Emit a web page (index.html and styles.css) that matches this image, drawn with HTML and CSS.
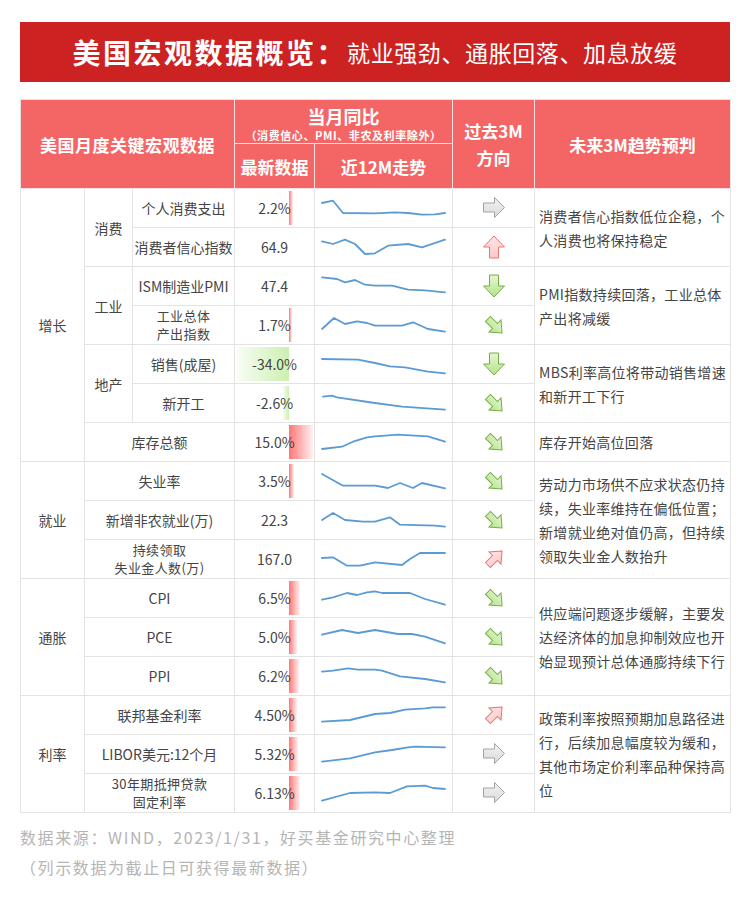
FILE: index.html
```html
<!DOCTYPE html>
<html lang="zh-CN">
<head>
<meta charset="utf-8">
<title>美国宏观数据概览</title>
<link rel="stylesheet" href="styles.css">
</head>
<body>
<svg class="sprite" aria-hidden="true">
  <defs>
    <linearGradient id="g-green" x1="0" y1="0" x2="0" y2="1"><stop offset="0" stop-color="#e4f7d2"/><stop offset="1" stop-color="#b4e38a"/></linearGradient>
    <linearGradient id="g-red" x1="0" y1="0" x2="0" y2="1"><stop offset="0" stop-color="#ffe6e6"/><stop offset="1" stop-color="#ffc8c8"/></linearGradient>
    <linearGradient id="g-grey" x1="0" y1="0" x2="0" y2="1"><stop offset="0" stop-color="#f3f3f3"/><stop offset="1" stop-color="#dadada"/></linearGradient>
  </defs>
  <symbol id="a-right" viewBox="0 0 24 24"><polygon points="1.5,7 12.5,7 12.5,1.5 22.5,11.5 12.5,21.5 12.5,16 1.5,16" fill="url(#g-grey)" stroke="#a3a3a3"/></symbol>
  <symbol id="a-up" viewBox="0 0 24 24"><polygon points="12,1 22.5,12 16.5,12 16.5,23 7.5,23 7.5,12 1.5,12" fill="url(#g-red)" stroke="#ee7272"/></symbol>
  <symbol id="a-down" viewBox="0 0 24 24"><polygon points="12,23 22.5,12 16.5,12 16.5,1 7.5,1 7.5,12 1.5,12" fill="url(#g-green)" stroke="#77ad49"/></symbol>
  <symbol id="a-dr" viewBox="0 0 24 24"><g transform="translate(13 13) rotate(45) translate(-10 -12)"><polygon points="0,8.5 10,8.5 10,3.5 20,12 10,20.5 10,15.5 0,15.5" fill="url(#g-green)" stroke="#77ad49"/></g></symbol>
  <symbol id="a-ur" viewBox="0 0 24 24"><g transform="translate(13 11) rotate(-45) translate(-10 -12)"><polygon points="0,8.5 10,8.5 10,3.5 20,12 10,20.5 10,15.5 0,15.5" fill="url(#g-red)" stroke="#ee7272"/></g></symbol>
</svg>

<div class="page">
  <div class="banner">
    <span class="lead">美国宏观数据概览：</span><span class="sub">就业强劲、通胀回落、加息放缓</span>
  </div>

  <table class="macro">
    <colgroup>
      <col class="c-cat"><col class="c-sub"><col class="c-item"><col class="c-val"><col class="c-trend"><col class="c-dir"><col class="c-note">
    </colgroup>
    <thead>
      <tr class="hr1">
        <th colspan="3" rowspan="2" class="h-name">美国月度关键宏观数据</th>
        <th colspan="2" class="h-yoy"><div class="yoy-title">当月同比</div><div class="yoy-note">（消费信心、PMI、非农及利率除外）</div></th>
        <th rowspan="2" class="h-dir">过去3M<br>方向</th>
        <th rowspan="2" class="h-note">未来3M趋势预判</th>
      </tr>
      <tr class="hr2">
        <th>最新数据</th>
        <th>近12M走势</th>
      </tr>
    </thead>
    <tbody>
      <tr>
        <td rowspan="7" class="cat">增长</td>
        <td rowspan="2" class="sub">消费</td>
        <td class="item">个人消费支出</td>
        <td class="val"><div class="bar pos" style="width:4px"></div><span>2.2%</span></td>
        <td class="trend"><svg viewBox="1 1 137 38"><polyline points="8,15 19,12.7 29,25 61,25.3 81,24.3 94,25 108,26.7 121,26.3 131,25"/></svg></td>
        <td class="dir"><svg><use href="#a-right"/></svg></td>
        <td rowspan="2" class="note">消费者信心指数低位企稳，个人消费也将保持稳定</td>
      </tr>
      <tr>
        <td class="item">消费者信心指数</td>
        <td class="val"><span>64.9</span></td>
        <td class="trend"><svg viewBox="1 1 137 38"><polyline points="8,14.3 19,17 31,12.7 41,17 51,27 61,26.3 74,18.7 94,17 108,20.3 131,12.7"/></svg></td>
        <td class="dir"><svg><use href="#a-up"/></svg></td>
      </tr>
      <tr>
        <td rowspan="2" class="sub">工业</td>
        <td class="item">ISM制造业PMI</td>
        <td class="val"><span>47.4</span></td>
        <td class="trend"><svg viewBox="1 1 137 38"><polyline points="8,11.3 23,13 31,16.3 41,14 51,18.7 61,19.7 78,19.7 94,23.7 111,24.3 131,26.3"/></svg></td>
        <td class="dir"><svg><use href="#a-down"/></svg></td>
        <td rowspan="2" class="note">PMI指数持续回落，工业总体产出将减缓</td>
      </tr>
      <tr>
        <td class="item two">工业总体<br>产出指数</td>
        <td class="val"><div class="bar pos" style="width:3px"></div><span>1.7%</span></td>
        <td class="trend"><svg viewBox="1 1 137 38"><polyline points="8,24 20,13 31,19 43,16.3 53,18 61,20.7 88,20.7 99,17.3 114,24 131,26.7"/></svg></td>
        <td class="dir"><svg><use href="#a-dr"/></svg></td>
      </tr>
      <tr>
        <td rowspan="2" class="sub">地产</td>
        <td class="item">销售(成屋)</td>
        <td class="val"><div class="bar neg" style="width:52px"></div><span>-34.0%</span></td>
        <td class="trend"><svg viewBox="1 1 137 38"><polyline points="8,15 44,15.7 61,19 76,22.3 91,23.3 114,27.7 131,29.3"/></svg></td>
        <td class="dir"><svg><use href="#a-down"/></svg></td>
        <td rowspan="2" class="note">MBS利率高位将带动销售增速和新开工下行</td>
      </tr>
      <tr>
        <td class="item">新开工</td>
        <td class="val"><div class="bar neg" style="width:6px"></div><span>-2.6%</span></td>
        <td class="trend"><svg viewBox="1 1 137 38"><polyline points="9,13.7 18,12.7 23,14.3 61,20 88,23.7 131,26.7"/></svg></td>
        <td class="dir"><svg><use href="#a-dr"/></svg></td>
      </tr>
      <tr>
        <td colspan="2" class="item">库存总额</td>
        <td class="val"><div class="bar pos" style="width:24px"></div><span>15.0%</span></td>
        <td class="trend"><svg viewBox="1 1 137 38"><polyline points="8,27 28,24.7 39,19.7 53,15.3 61,14.3 84,12.7 114,14.3 131,19.7"/></svg></td>
        <td class="dir"><svg><use href="#a-dr"/></svg></td>
        <td class="note">库存开始高位回落</td>
      </tr>

      <tr>
        <td rowspan="3" class="cat">就业</td>
        <td colspan="2" class="item">失业率</td>
        <td class="val"><div class="bar pos" style="width:5px"></div><span>3.5%</span></td>
        <td class="trend"><svg viewBox="1 1 137 38"><polyline points="8,13 29,24.7 61,24.7 74,27 86,22 99,27 108,22 131,27.3"/></svg></td>
        <td class="dir"><svg><use href="#a-dr"/></svg></td>
        <td rowspan="3" class="note">劳动力市场供不应求状态仍持续，失业率维持在偏低位置；新增就业绝对值仍高，但持续领取失业金人数抬升</td>
      </tr>
      <tr>
        <td colspan="2" class="item">新增非农就业(万)</td>
        <td class="val"><span>22.3</span></td>
        <td class="trend"><svg viewBox="1 1 137 38"><polyline points="8,20 19,13 31,20 49,21.7 61,21.7 76,17.3 86,24.7 121,25.7 131,26.7"/></svg></td>
        <td class="dir"><svg><use href="#a-dr"/></svg></td>
      </tr>
      <tr>
        <td colspan="2" class="item two">持续领取<br>失业金人数(万)</td>
        <td class="val"><span>167.0</span></td>
        <td class="trend"><svg viewBox="1 1 137 38"><polyline points="8,19 19,18.3 33,26.7 46,26.7 61,23.3 88,26 96,20 106,14 131,14"/></svg></td>
        <td class="dir"><svg><use href="#a-ur"/></svg></td>
      </tr>

      <tr>
        <td rowspan="3" class="cat">通胀</td>
        <td colspan="2" class="item">CPI</td>
        <td class="val"><div class="bar pos" style="width:11px"></div><span>6.5%</span></td>
        <td class="trend"><svg viewBox="1 1 137 38"><polyline points="8,21.7 19,19.3 33,15 43,17 53,14.3 61,13.3 68,15 96,15 111,21 131,26.7"/></svg></td>
        <td class="dir"><svg><use href="#a-dr"/></svg></td>
        <td rowspan="3" class="note">供应端问题逐步缓解，主要发达经济体的加息抑制效应也开始显现预计总体通膨持续下行</td>
      </tr>
      <tr>
        <td colspan="2" class="item">PCE</td>
        <td class="val"><div class="bar pos" style="width:8px"></div><span>5.0%</span></td>
        <td class="trend"><svg viewBox="1 1 137 38"><polyline points="8,17.7 28,13 44,16 61,13 84,17 98,17 111,19.7 131,26.3"/></svg></td>
        <td class="dir"><svg><use href="#a-dr"/></svg></td>
      </tr>
      <tr>
        <td colspan="2" class="item">PPI</td>
        <td class="val"><div class="bar pos" style="width:10px"></div><span>6.2%</span></td>
        <td class="trend"><svg viewBox="1 1 137 38"><polyline points="8,15.7 19,14.7 34,12.3 44,13.7 61,13.7 68,14.7 86,20.3 111,23 131,26.3"/></svg></td>
        <td class="dir"><svg><use href="#a-dr"/></svg></td>
      </tr>

      <tr>
        <td rowspan="3" class="cat">利率</td>
        <td colspan="2" class="item">联邦基金利率</td>
        <td class="val"><div class="bar pos" style="width:8px"></div><span>4.50%</span></td>
        <td class="trend"><svg viewBox="1 1 137 38"><polyline points="8,26.7 36,25 61,19 76,18 91,14.7 111,13.3 119,12.3 131,12.3"/></svg></td>
        <td class="dir"><svg><use href="#a-ur"/></svg></td>
        <td rowspan="3" class="note">政策利率按照预期加息路径进行，后续加息幅度较为缓和，其他市场定价利率品种保持高位</td>
      </tr>
      <tr>
        <td colspan="2" class="item">LIBOR美元:12个月</td>
        <td class="val"><div class="bar pos" style="width:9px"></div><span>5.32%</span></td>
        <td class="trend"><svg viewBox="1 1 137 38"><polyline points="8,27.7 36,24.3 61,18.3 78,16 94,13.3 101,12.7 131,13.3"/></svg></td>
        <td class="dir"><svg><use href="#a-right"/></svg></td>
      </tr>
      <tr>
        <td colspan="2" class="item two">30年期抵押贷款<br>固定利率</td>
        <td class="val"><div class="bar pos" style="width:11px"></div><span>6.13%</span></td>
        <td class="trend"><svg viewBox="1 1 137 38"><polyline points="8,27.7 36,20 61,19.3 76,20 93,13.3 111,12.7 119,15 131,16"/></svg></td>
        <td class="dir"><svg><use href="#a-right"/></svg></td>
      </tr>
    </tbody>
  </table>

  <div class="source">
    <p>数据来源：WIND，2023/1/31，好买基金研究中心整理</p>
    <p>（列示数据为截止日可获得最新数据）</p>
  </div>
</div>
</body>
</html>
```

FILE: styles.css
```css
* { box-sizing: border-box; }

body {
  margin: 0;
  background: #fff;
  font-family: "Noto Sans CJK SC", "Noto Sans", sans-serif;
  color: #454545;
}

.sprite {
  display: block;
  width: 0;
  height: 0;
  overflow: hidden;
}

.page {
  width: 750px;
  padding: 22px 20px 0 20px;
}

/* ---------- banner ---------- */
.banner {
  height: 60px;
  background: #cc2222;
  color: #fff;
  display: flex;
  align-items: center;
  justify-content: center;
}
.banner .lead {
  font-size: 28px;
  font-weight: 700;
  letter-spacing: 2.5px;
}
.banner .sub {
  font-size: 23px;
  font-weight: 400;
  letter-spacing: 0.6px;
}

/* ---------- table ---------- */
.macro {
  margin-top: 17px;
  width: 710px;
  border-collapse: collapse;
  table-layout: fixed;
}
.c-cat { width: 64px; }
.c-sub { width: 48px; }
.c-item { width: 102px; }
.c-val { width: 80px; }
.c-trend { width: 138px; }
.c-dir { width: 82px; }
.c-note { width: 196px; }

.macro th {
  background: #f46666;
  color: #fff;
  font-weight: 700;
  font-size: 17px;
  border: 1px solid #fbe1e1;
  padding: 0;
  text-align: center;
  vertical-align: middle;
}
.macro thead tr:first-child th { border-top-color: #e3e3e3; }
.macro th.h-name { border-left-color: #e3e3e3; letter-spacing: 0.5px; }
.macro th.h-note { border-right-color: #e3e3e3; }

.hr1 { height: 44px; }
.hr2 { height: 45px; }

.yoy-title {
  font-size: 18px;
  line-height: 22px;
  padding-top: 4px;
}
.yoy-note {
  font-size: 11px;
  line-height: 16px;
  letter-spacing: 0.6px;
}
.h-dir { line-height: 27px; }

.macro td {
  border: 1px solid #e3e3e3;
  padding: 0;
  text-align: center;
  vertical-align: middle;
  font-size: 14px;
}
.macro tbody tr { height: 39px; }

.item { white-space: nowrap; }
.item.two {
  font-size: 13px;
  line-height: 18.5px;
  letter-spacing: 0.4px;
}

.val {
  position: relative;
  font-size: 15px;
}
.val span {
  position: relative;
  z-index: 1;
}
.bar {
  position: absolute;
  top: 2px;
  bottom: 2px;
}
.bar.pos {
  left: 54px;
  background: linear-gradient(to right, #ff7676, #fff2f2);
}
.bar.neg {
  right: 25px;
  background: linear-gradient(to left, #ccf0b0, #f8fdf4);
}

.trend svg {
  display: block;
  width: 137px;
  height: 38px;
  overflow: visible;
}
.trend polyline {
  fill: none;
  stroke: #5b9bd5;
  stroke-width: 1.8;
  stroke-linejoin: round;
  stroke-linecap: round;
}

.dir svg {
  display: block;
  width: 24px;
  height: 24px;
  margin: 0 auto;
}

.note {
  text-align: left !important;
  padding: 0 2px 0 4px !important;
  line-height: 24px;
  letter-spacing: 0.3px;
}

/* ---------- source ---------- */
.source {
  margin-top: 9px;
  color: #b5b5b5;
  font-size: 16px;
  letter-spacing: 1.6px;
  line-height: 30px;
}
.source p { margin: 0; }
```
